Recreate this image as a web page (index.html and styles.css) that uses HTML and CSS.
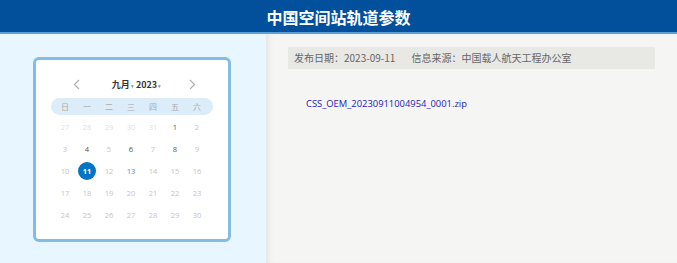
FILE: index.html
```html
<!DOCTYPE html>
<html lang="zh">
<head>
    <meta charset="UTF-8">
    <title>中国空间站轨道参数</title>
    <link rel="stylesheet" href="styles.css">
</head>
<body>
    <div class="header">中国空间站轨道参数</div>
    <div class="main">
        <div class="side">
            <div class="calendar">
                <div class="cal-nav">
                    <svg class="arrow" width="7" height="11" viewBox="0 0 7 11"><path d="M6 1 L1.5 5.5 L6 10" fill="none" stroke="#b0b0b0" stroke-width="1.2"/></svg>
                    <span class="cal-title">九月<i class="caret">&#9662;</i> 2023<i class="caret">&#9662;</i></span>
                    <svg class="arrow" width="7" height="11" viewBox="0 0 7 11"><path d="M1 1 L5.5 5.5 L1 10" fill="none" stroke="#b0b0b0" stroke-width="1.2"/></svg>
                </div>
                <div class="week">
                    <span>日</span><span>一</span><span>二</span><span>三</span><span>四</span><span>五</span><span>六</span>
                </div>
                <div class="days" id="days"></div>
            </div>
        </div>
        <div class="content">
            <div class="info">
                <span>发布日期：2023-09-11</span>
                <span>信息来源：中国载人航天工程办公室</span>
            </div>
            <a class="file" href="#">CSS_OEM_20230911004954_0001.zip</a>
        </div>
    </div>
    <script>
        const dias = [];
        [27, 28, 29, 30, 31].forEach(d => dias.push({ n: d, c: 'off' }));
        for (let d = 1; d <= 30; d++) {
            let c = '';
            if ([1, 4, 6, 8].includes(d)) c = 'has';
            if (d === 11) c = 'sel';
            if (d === 13) c = 'today';
            dias.push({ n: d, c: c });
        }
        document.getElementById('days').innerHTML = dias
            .map(d => '<span class="' + d.c + '"><b>' + d.n + '</b></span>')
            .join('');
    </script>
</body>
</html>
```

FILE: styles.css
```css
body {
    margin: 0;
    font-family: "Microsoft YaHei", "Noto Sans CJK SC", sans-serif;
    background-color: #f5f5f4;
    height: 263px;
    overflow: hidden;
}
.header {
    height: 32px;
    background-color: #02509c;
    border-bottom: 2px solid #5a9fd8;
    color: white;
    font-size: 16px;
    font-weight: bold;
    text-align: center;
    line-height: 34px;
}
.main {
    display: flex;
    height: 229px;
}
.side {
    width: 266px;
    background-color: #e8f6ff;
    padding: 23px 0 0 33px;
    box-sizing: border-box;
}
.content {
    flex: 1;
    background-color: #f5f5f4;
    box-shadow: inset 6px 0 6px -4px rgba(0, 0, 0, 0.08);
    padding: 13px 22px 0 22px;
}
.calendar {
    width: 198px;
    height: 185px;
    box-sizing: border-box;
    background-color: white;
    border: 3px solid #82bde3;
    border-radius: 6px;
    padding: 16px 15px 0 15px;
}
.cal-nav {
    display: flex;
    justify-content: space-between;
    align-items: center;
    height: 16px;
    padding: 0 17px 0 22px;
}
.cal-title {
    font-size: 9px;
    font-weight: bold;
    color: #333;
    font-family: "Noto Sans CJK SC", sans-serif;
    margin-left: 4px;
}
.caret {
    font-style: normal;
    font-size: 5px;
    color: #999;
    margin-left: 1px;
    vertical-align: middle;
}
.week {
    display: grid;
    grid-template-columns: repeat(7, 22px);
    margin-top: 6px;
    padding: 0 3px;
    height: 17px;
    align-items: center;
    background-color: #dcecf8;
    border-radius: 9px;
    font-size: 8px;
    color: #aaa;
    text-align: center;
}
.days {
    display: grid;
    grid-template-columns: repeat(7, 22px);
    grid-auto-rows: 22px;
    padding: 1px 3px 0 3px;
    font-family: "Open Sans", "Liberation Sans", sans-serif;
    font-size: 7.5px;
    color: #c4c4c4;
}
.days span {
    display: flex;
    align-items: center;
    justify-content: center;
}
.days b {
    font-weight: normal;
    width: 18px;
    height: 18px;
    line-height: 18px;
    text-align: center;
    border-radius: 50%;
}
.days .off {
    color: #e0e0e0;
}
.days .has {
    color: #555;
}
.days .today {
    color: #3a94dc;
}
.days .sel b {
    background-color: #0474c4;
    color: white;
    font-weight: bold;
}
.info {
    background-color: #e8e8e5;
    height: 22px;
    line-height: 22px;
    padding: 0 6px;
    font-size: 10px;
    color: #666;
}
.info span {
    margin-right: 14px;
}
.file {
    display: inline-block;
    margin: 28px 0 0 18px;
    font-size: 9.4px;
    color: #2222bb;
    text-decoration: none;
    font-family: "Open Sans", "Liberation Sans", sans-serif;
}
```
